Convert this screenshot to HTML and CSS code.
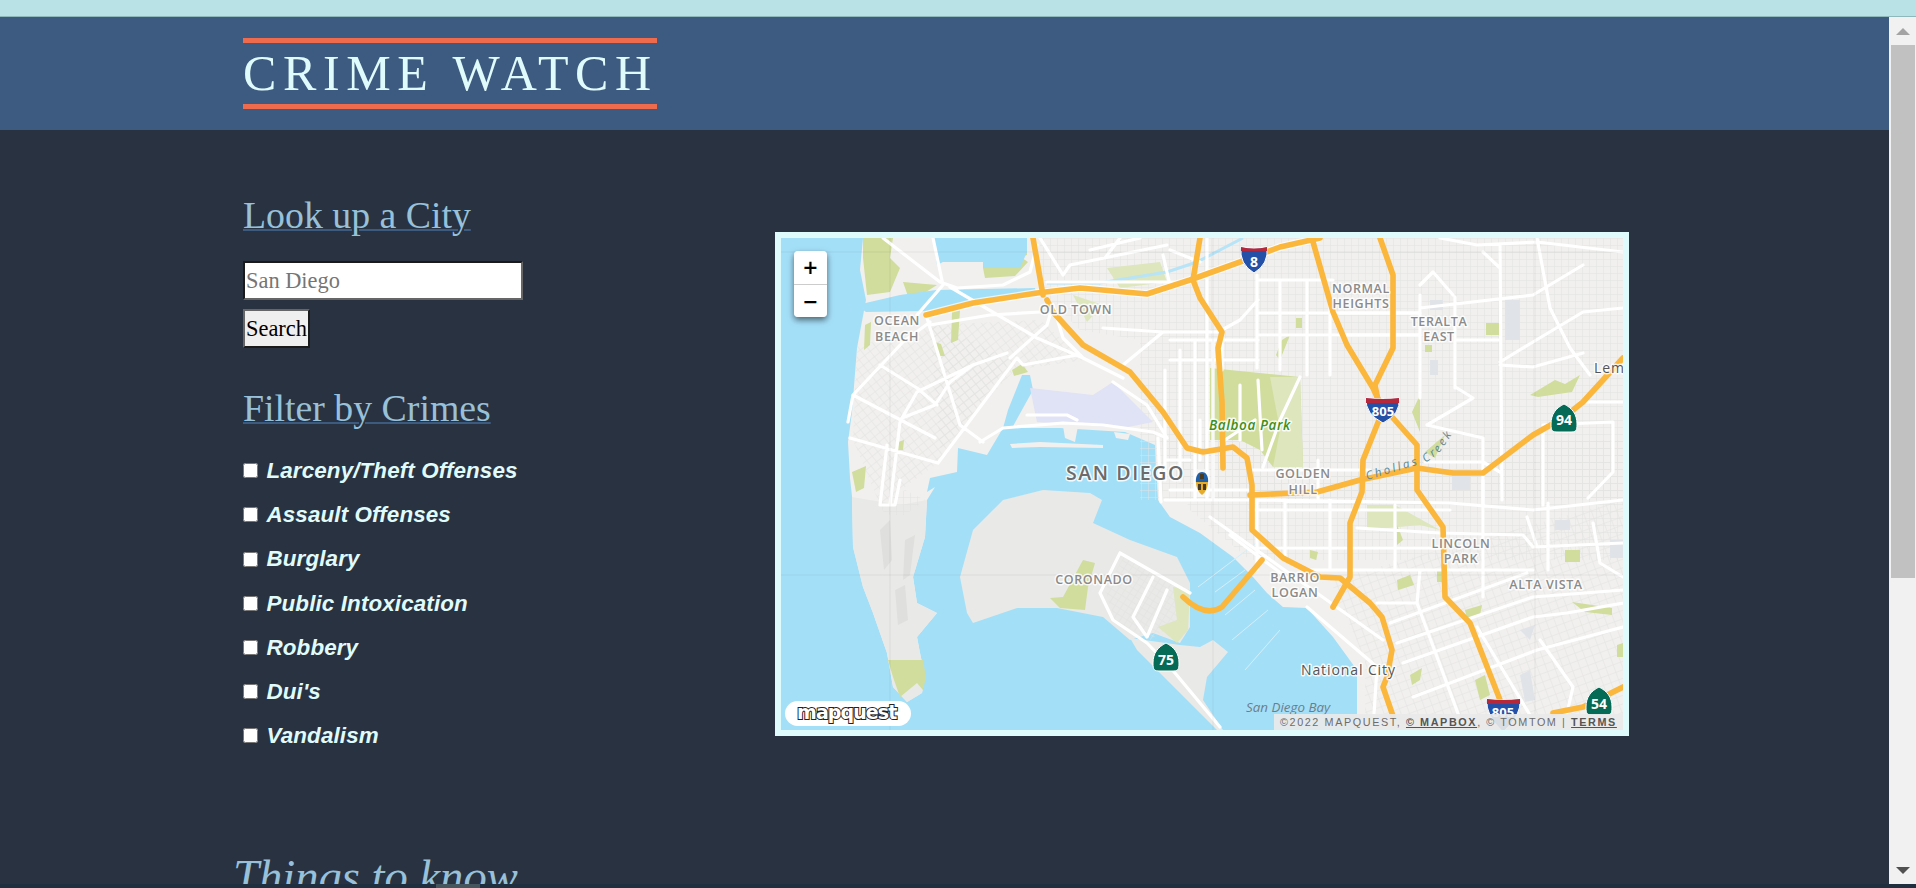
FILE: index.html
```html
<!DOCTYPE html>
<html lang="en">
<head>
<meta charset="utf-8">
<title>Crime Watch</title>
<link rel="stylesheet" href="styles.css">
</head>
<body>
<div class="topbar"></div>
<div class="window">
  <main class="page">
    <header class="banner"><h1 class="brand">CRIME WATCH</h1></header>
    <section class="content">
      <aside class="sidebar">
        <h2 class="heading">Look up a City</h2>
        <form class="search">
          <input class="city" type="text" placeholder="San Diego">
          <button class="go" type="button">Search</button>
        </form>
        <h2 class="heading">Filter by Crimes</h2>
        <ul class="filters">
          <li><label class="filter"><input class="check" type="checkbox"><span>Larceny/Theft Offenses</span></label></li>
          <li><label class="filter"><input class="check" type="checkbox"><span>Assault Offenses</span></label></li>
          <li><label class="filter"><input class="check" type="checkbox"><span>Burglary</span></label></li>
          <li><label class="filter"><input class="check" type="checkbox"><span>Public Intoxication</span></label></li>
          <li><label class="filter"><input class="check" type="checkbox"><span>Robbery</span></label></li>
          <li><label class="filter"><input class="check" type="checkbox"><span>Dui's</span></label></li>
          <li><label class="filter"><input class="check" type="checkbox"><span>Vandalism</span></label></li>
        </ul>
      </aside>
      <div class="map">
        <svg class="tiles" viewBox="781 238 842 492" width="842" height="492">
          <defs>
            <pattern id="gridA" width="7" height="7" patternUnits="userSpaceOnUse"><path d="M0 0H7M0 0V7" class="fine"/></pattern>
            <pattern id="gridB" width="7" height="7" patternUnits="userSpaceOnUse" patternTransform="rotate(-38)"><path d="M0 0H7M0 0V7" class="fine"/></pattern>
            <pattern id="gridC" width="8" height="8" patternUnits="userSpaceOnUse" patternTransform="rotate(-20)"><path d="M0 0H8M0 0V8" class="fine"/></pattern>
            <pattern id="gridD" width="6" height="6" patternUnits="userSpaceOnUse" patternTransform="rotate(32)"><path d="M0 0H6M0 0V6" class="fine"/></pattern>
          </defs>
          <rect class="water" x="781" y="238" width="842" height="492"/>
          <!-- mainland -->
          <path class="land" d="M863 238H1623V730H1357V670L1333 637 1307 608 1283 607 1267 593 1253 577 1233 557 1200 533 1170 517 1158 500 1155 445 1125 432 1060 428 1012 428 1033 390 1030 375 1022 375 1008 410 1003 428 987 455 958 448 957 472 930 478 927 492 935 487 927 500 925 537 913 577 917 603 937 613 917 637 920 653 925 677 922 693 907 702 893 687 887 653 873 613 863 587 853 547 852 497 853 505 850 478 848 442 852 412 857 348 866 300 860 270Z"/>
          <path class="land-dim" d="M852 497L853 547 863 587 873 613 887 653 893 687 907 702 922 693 925 677 920 653 917 637 937 613 917 603 913 577 925 537 927 500 900 505Z"/>
          <path class="shade" d="M880 530L890 520 892 560 884 570ZM905 540L915 535 910 575 903 580ZM895 590L905 585 908 620 898 625Z"/>
          <!-- Coronado and strand -->
          <path class="land-dim" d="M960 577L973 530 1003 500 1043 490 1090 493 1102 500 1093 523 1130 540 1177 557 1190 583 1190 627 1180 643 1153 633 1130 640 1103 617 1057 608 1017 608 973 623 967 613Z"/>
          <path class="land-dim" d="M1130 638L1180 645 1200 647 1213 640 1228 652 1207 677 1203 700 1223 730 1217 730 1137 650Z"/>
          <path class="land" d="M1010 444L1040 442 1103 445 1103 448 1040 447 1012 448Z"/>
          <path class="land" d="M1063 426L1078 426 1075 442 1065 438ZM1114 432L1130 434 1128 440 1116 438Z"/>
          <!-- street texture -->
          <path class="tex-b" d="M857 345L905 335 940 325 1010 360 938 463 880 505 853 440Z"/>
          <path class="tex-b" d="M930 325L1040 320 1085 360 1015 370 940 450Z"/>
          <path class="tex-a" d="M1040 238H1623V500H1140V340L1080 330 1040 290Z"/>
          <path class="tex-a" d="M1160 440H1623V560H1250L1190 510Z"/>
          <path class="tex-c" d="M1330 580L1623 500V730H1365L1365 660Z"/>
          <path class="tex-d" d="M1105 590L1125 555 1190 590 1180 620 1150 640 1115 620Z"/>
          <path class="tex-a" d="M880 505L905 490 925 500 905 515 885 515Z"/>
          <path class="block" d="M1430 300H1443V310H1430ZM1505 300H1520V340H1505ZM1430 360H1438V375H1430ZM1452 470H1470V490H1452ZM1555 520H1570V530H1555ZM1610 540H1623V558H1610ZM1520 630L1535 625 1530 640ZM1520 675L1530 670 1535 700 1525 702Z"/>
          <!-- parks -->
          <path class="park" d="M1210 368L1300 377 1303 467 1273 467 1260 450 1240 440 1210 440Z"/>
          <path class="park-soft" d="M1270 377L1300 377 1303 467 1273 467 1280 430Z"/>
          <path class="park" d="M888 660L923 660 926 677 923 690 917 683 900 697 893 677Z"/>
          <path class="park" d="M863 238H893L890 258 900 268 890 292 867 295 863 258Z"/>
          <path class="park" d="M903 282L937 285 910 302Z"/>
          <path class="park" d="M993 238H1027L1027 255 1005 262 983 268 985 278 1015 276 1028 262"/>
          <path class="park-soft" d="M1107 268L1160 262 1167 282 1120 288Z"/>
          <path class="park-soft" d="M1073 295L1103 305 1087 322Z"/>
          <path class="park" d="M1050 598L1063 597 1083 560 1095 563 1088 587 1085 610 1060 608Z"/>
          <path class="park-soft" d="M1173 587L1190 590 1188 630 1177 643 1158 627 1177 620Z"/>
          <path class="park" d="M865 325L871 322 870 345 864 350ZM952 312L960 310 958 340 951 343ZM935 342L941 344 945 356 938 356ZM1012 370L1022 364 1028 372 1014 376ZM898 442L904 440 903 450 897 450ZM852 472L866 466 864 488 856 492Z"/>
          <path class="park" d="M1530 395L1555 380 1565 384 1580 375 1572 392 1538 397ZM1486 323H1499V335H1486ZM1425 345H1432V352H1425ZM1296 318H1302V328H1296Z"/>
          <path class="park" d="M1412 412L1420 395 1420 432ZM1425 452L1445 435 1435 458ZM1282 340L1290 335 1280 360 1276 355Z"/>
          <path class="park-soft" d="M1367 505H1395L1440 530 1420 525 1367 530Z"/>
          <path class="park" d="M1397 525L1403 540 1397 545ZM1310 550L1318 552 1316 560 1310 558ZM1397 580L1410 575 1414 585 1398 590ZM1437 570H1444V582H1437ZM1465 610L1482 605 1480 615 1467 618ZM1565 550H1580V562H1565ZM1572 602L1612 608 1612 615 1585 612ZM1617 645L1623 643V657L1617 657ZM1410 675L1422 668 1420 680 1412 685ZM1475 680L1485 675 1490 695 1480 700Z"/>
          <!-- airport -->
          <path class="airport" d="M1030 388L1093 395 1113 382 1153 422 1123 428 1037 422Z"/>
          <!-- water channels -->
          <path class="water" d="M857 305L900 295 936 290 1035 288 1037 296 973 302 927 311 866 312Z"/>
          <path class="water" d="M933 238H1027L1027 252 1020 268 983 268 983 262 943 262 937 265Z"/>
          <path class="river" d="M1047 283L1100 283 1167 272 1197 262 1243 238"/>
          <!-- piers -->
          <path class="pier" d="M1198 587L1260 540M1215 592L1245 570M1225 615L1255 590M1232 640L1268 610M1245 670L1280 630"/>
          <!-- minor white roads -->
          <path class="road" d="M883 238L940 282 957 288 1003 285 1030 272 1037 245M933 238L943 285 917 315M950 287L1037 338 1083 358M1010 358L1047 325 1053 305M927 318L960 425 983 442M930 325L990 315 1040 312M853 395L903 342 930 322M848 422L853 395 935 438M880 365L917 388 937 405M850 438L938 463M938 463L1017 358 1023 365 1077 355 1083 358M902 418L917 392 973 365 1007 353M902 418L935 405 950 382 973 365M900 422L890 505M880 505L887 445M880 505L895 505 900 480M980 442L1003 428 1063 423 1103 425 1153 432 1167 438M1158 438L1161 502M1027 415H1067L1077 420M1113 382L1147 405 1167 438M1123 365L1163 332H1220M1053 305L1063 338 1083 358 1123 378M1063 275L1070 265 1167 245M1103 328L1163 332M1163 255L1170 285M1047 282H1187M1040 238L1063 275M1090 250L1140 238M1120 238L1105 258M1170 250L1200 262"/>
          <path class="road" d="M1257 280H1333M1257 313H1420M1257 335H1420M1257 275V368M1280 280V370M1307 280V375M1330 300V375M1207 238V500M1213 340V500M1170 340H1258M1170 360H1258M1165 370V480M1180 350V480M1195 340V500M1222 370V330L1240 320 1258 300M1170 490H1250M1165 500H1250M1165 460H1190M1200 420V460M1258 380L1262 450M1240 385V440M1225 440L1255 420M1300 377L1280 420 1263 467M1250 510H1450M1252 470H1370M1318 460V500"/>
          <path class="road" d="M1420 308L1533 295 1583 265M1440 238L1477 245 1537 242 1623 252M1500 245L1502 500M1537 238L1550 308 1570 348 1590 375M1500 362L1533 342 1583 312 1623 308M1420 295V398M1455 297V388M1420 285L1433 272 1453 295M1455 340H1500M1500 365L1533 367 1583 353M1483 252L1500 268M1457 388L1473 398 1427 425M1427 425L1483 438V505M1543 425L1613 422V472L1588 498M1543 432V505M1580 402H1623M1425 462H1483M1483 462L1500 472M1340 313H1420M1340 335H1420"/>
          <path class="road" d="M1257 500L1450 503 1533 510 1623 500M1357 528L1440 533 1523 535 1533 547 1623 543M1257 548H1443M1310 570H1533M1483 480V597M1390 623L1527 573M1397 643L1533 597 1623 590M1403 663L1533 617 1567 613 1623 603M1413 697L1537 650 1623 627M1420 570L1417 603 1463 727M1377 603H1417M1477 627L1533 720M1540 640L1573 687 1567 713M1548 503V570M1527 517L1537 547M1593 523L1600 563 1623 577M1210 517L1383 640M1307 607L1377 667 1373 730M1257 500V570M1285 500V560M1330 500V570M1395 505V570M1230 535L1290 580M1120 553L1190 593M1120 553L1100 593 1113 620 1147 643 1170 667 1220 727M1153 577L1133 617 1147 637 1167 590"/>
          <!-- tile seams -->
          <path class="seam" d="M781 252H1623M781 575H1623M890 238V730M1213 238V730M1535 238V730"/>
          <!-- highways -->
          <path class="casing" d="M926 315L973 303 1037 293 1080 288 1147 294 1190 280 1240 262 1280 247 1320 238"/>
          <path class="hw" d="M926 315L973 303 1037 293 1080 288 1147 294 1190 280 1240 262 1280 247 1320 238"/>
          <path class="hw" d="M1033 238L1043 295M1047 300L1053 312 1083 345 1130 372 1163 412 1187 448 1203 452 1233 447 1247 458 1252 485V530L1283 558 1320 577 1340 578 1370 603 1382 617 1392 650 1387 677 1383 687 1393 716"/>
          <path class="hw" d="M1200 238L1193 280 1200 298 1222 332 1218 348 1222 402 1223 468"/>
          <path class="hw" d="M1250 495L1317 492 1360 480 1417 468 1453 473H1483L1533 435 1563 418 1583 402 1623 358"/>
          <path class="hw" d="M1313 242L1333 312 1347 345 1373 388 1383 410 1363 460 1362 492 1350 523V577L1333 607"/>
          <path class="hw" d="M1380 238L1393 275V348L1375 385 1378 400M1393 418L1417 445V490L1443 527 1445 597 1470 623 1502 705"/>
          <path class="hw" d="M1183 597Q1205 618 1222 607L1262 560"/>
          <path class="hw" d="M1553 713L1583 707 1623 687"/>
          <!-- labels -->
          <text class="lbl" x="897" y="325" text-anchor="middle">OCEAN</text>
          <text class="lbl" x="897" y="341" text-anchor="middle">BEACH</text>
          <text class="lbl" x="1076" y="314" text-anchor="middle">OLD TOWN</text>
          <text class="lbl" x="1361" y="293" text-anchor="middle">NORMAL</text>
          <text class="lbl" x="1361" y="308" text-anchor="middle">HEIGHTS</text>
          <text class="lbl" x="1439" y="326" text-anchor="middle">TERALTA</text>
          <text class="lbl" x="1439" y="341" text-anchor="middle">EAST</text>
          <text class="lbl" x="1303" y="478" text-anchor="middle">GOLDEN</text>
          <text class="lbl" x="1303" y="494" text-anchor="middle">HILL</text>
          <text class="lbl" x="1295" y="582" text-anchor="middle">BARRIO</text>
          <text class="lbl" x="1295" y="597" text-anchor="middle">LOGAN</text>
          <text class="lbl" x="1461" y="548" text-anchor="middle">LINCOLN</text>
          <text class="lbl" x="1461" y="563" text-anchor="middle">PARK</text>
          <text class="lbl" x="1546" y="589" text-anchor="middle">ALTA VISTA</text>
          <text class="lbl" x="1094" y="584" text-anchor="middle">CORONADO</text>
          <text class="city-lbl" x="1066" y="480">SAN DIEGO</text>
          <text class="town" x="1594" y="373">Lem</text>
          <text class="town" x="1301" y="675">National City</text>
          <text class="park-lbl" x="1209" y="430">Balboa Park</text>
          <text class="bay-lbl" x="1246" y="712">San Diego Bay</text>
          <path id="creek" d="M1367 480L1427 462 1440 452 1462 420" fill="none"/>
          <text class="creek-lbl"><textPath href="#creek">Chollas Creek</textPath></text>
          <!-- shields -->
          <g>
            <path class="i-blue" d="M1241 247Q1254 250 1267 247 1269 264 1254 273 1239 264 1241 247Z"/>
            <path class="i-red" d="M1241 247Q1254 250 1267 247L1267 251H1241Z"/>
            <text class="sh" x="1254" y="267" text-anchor="middle">8</text>
            <path class="i-blue" d="M1366 398Q1383 400 1399 398 1401 414 1383 423 1365 414 1366 398Z"/>
            <path class="i-red" d="M1366 398Q1383 400 1399 398L1399 403H1366Z"/>
            <text class="sh narrow" x="1383" y="416" text-anchor="middle">805</text>
            <path class="i-blue" d="M1487 699Q1503 701 1520 699 1522 715 1503 732 1485 715 1487 699Z"/>
            <path class="i-red" d="M1487 699Q1503 701 1520 699L1520 704H1487Z"/>
            <text class="sh narrow" x="1503" y="717" text-anchor="middle">805</text>
            <path class="ca" d="M1564 404C1572 408 1577 414 1577 424 1577 431 1576 432 1570 432H1558C1552 432 1551 431 1551 424 1551 414 1556 408 1564 404Z"/>
            <text class="sh" x="1564" y="425" text-anchor="middle">94</text>
            <path class="ca" d="M1166 643C1174 647 1179 653 1179 663 1179 670 1178 671 1172 671H1160C1154 671 1153 670 1153 663 1153 653 1158 647 1166 643Z"/>
            <text class="sh" x="1166" y="665" text-anchor="middle">75</text>
            <path class="ca" d="M1599 687C1607 691 1612 697 1612 707 1612 714 1611 715 1605 715H1593C1587 715 1586 714 1586 707 1586 697 1591 691 1599 687Z"/>
            <text class="sh" x="1599" y="709" text-anchor="middle">54</text>
          </g>
          <!-- marker -->
          <g>
            <rect class="pin-halo" x="1194" y="469" width="16" height="28" rx="2"/>
            <path class="pin-blue" d="M1196 483C1195 475 1199 472 1202 472 1205 472 1209 475 1208 483Z"/>
            <path class="pin-gold" d="M1196 482H1208C1208 488 1205 493 1202 495 1199 493 1196 488 1196 482Z"/>
            <path class="pin-dark" d="M1200 474H1204V479H1200ZM1198 484H1201V490H1198ZM1203 484H1206V490H1203Z"/>
          </g>
        </svg>
        <div class="zoombox">
          <button class="zoombtn" type="button">+</button>
          <button class="zoombtn" type="button">−</button>
        </div>
        <div class="logo">mapquest</div>
        <div class="credit">©2022 MAPQUEST, <a class="creditlink">© MAPBOX</a>, © TOMTOM | <a class="creditlink">TERMS</a></div>
      </div>
    </section>
    <h2 class="know">Things to know</h2>
  </main>
  <div class="scrollbar">
    <div class="sb-btn"><span class="arrow-up"></span></div>
    <div class="sb-track"><div class="sb-thumb"></div></div>
    <div class="sb-btn"><span class="arrow-down"></span></div>
  </div>
</div>
<div class="bottomstrip"><span class="strip-patch"></span></div>
</body>
</html>
```
FILE: styles.css
```css
* { box-sizing: border-box; }
html, body { height: 100%; }
body {
  margin: 0;
  height: 888px;
  overflow: hidden;
  display: flex;
  flex-direction: column;
  background: #293241;
  color: #e0fbfc;
  font-family: "Liberation Serif", serif;
  font-size: 22.4px;
  line-height: 1.5;
}
.topbar { height: 17px; background: #b9e2e6; border-bottom: 1px solid #8fb8bc; flex: none; }
.window { flex: 1; min-height: 0; display: flex; }
.page { flex: 1; min-width: 0; overflow: hidden; }
.banner { height: 113px; background: #3d5a80; padding: 21px 0 0 243px; }
.brand {
  display: inline-block;
  width: 414px;
  margin: 0;
  border-top: 5px solid #ee6c4d;
  border-bottom: 5px solid #ee6c4d;
  height: 71px;
  font-size: 50px;
  font-weight: 400;
  line-height: 61px;
  letter-spacing: 6.6px;
  white-space: nowrap;
  color: #e0fbfc;
}
.content { display: flex; padding: 56px 0 0 243px; }
.sidebar { width: 532px; flex: none; }
.heading {
  margin: 0 0 17px;
  font-size: 37.8px;
  font-weight: 400;
  line-height: 58px;
  color: #98c1d9;
  text-decoration: underline;
  text-decoration-color: #3d5a80;
  text-decoration-thickness: 2px;
}
.search { display: flex; flex-direction: column; align-items: flex-start; gap: 9px; margin-bottom: 31px; }
.city {
  width: 280px;
  height: 39px;
  padding: 1px;
  border: 2px solid;
  border-color: #1a1a1a #666 #666 #1a1a1a;
  background: #fff;
  font: 22.4px/33px "Liberation Serif", serif;
}
.city::placeholder { color: #757575; opacity: 1; }
.go {
  height: 39px;
  padding: 1px;
  border: 2px solid;
  border-color: #666 #1a1a1a #1a1a1a #666;
  background: #efefef;
  color: #000;
  font: 22.4px/33px "Liberation Serif", serif;
}
.filters { list-style: none; margin: 0; padding: 0; display: flex; flex-direction: column; gap: 10.6px; }
.filter {
  display: flex;
  align-items: center;
  gap: 8.5px;
  font-family: "Liberation Sans", sans-serif;
  font-style: italic;
  font-weight: 700;
  line-height: 33.6px;
  letter-spacing: .12px;
  color: #e0fbfc;
}
.check { width: 15px; height: 15px; margin: 0; flex: none; }
.map {
  position: relative;
  flex: none;
  width: 854px;
  height: 504px;
  margin-top: 46px;
  border: 6px solid #e0fbfc;
  overflow: hidden;
}
.tiles { display: block; }
.water { fill: #a4dff8; }
.land { fill: #f1f0ee; }
.land-dim { fill: #e9e9e7; }
.shade { fill: #dfdfdd; }
.block { fill: #e0e4e8; }
.fine { fill: none; stroke: #e2e2e0; stroke-width: 1; }
.tex-a { fill: url(#gridA); }
.tex-b { fill: url(#gridB); }
.tex-c { fill: url(#gridC); }
.tex-d { fill: url(#gridD); }
.park { fill: #d0dd9d; }
.park-soft { fill: #dde6bd; }
.airport { fill: #e0e2f5; }
.river { fill: none; stroke: #b7e4f7; stroke-width: 3; }
.pier { fill: none; stroke: #d4effa; stroke-width: 1; }
.road { fill: none; stroke: #fff; stroke-width: 3.2; stroke-linejoin: round; stroke-linecap: round; }
.seam { fill: none; stroke: #000; stroke-opacity: .06; stroke-width: 1; }
.casing { fill: none; stroke: #fff; stroke-width: 8; stroke-opacity: .7; }
.hw { fill: none; stroke: #fbb63c; stroke-width: 5.6; stroke-linejoin: round; stroke-linecap: round; }
.lbl, .city-lbl, .town, .park-lbl, .bay-lbl, .creek-lbl, .sh { font-family: "Open Sans", sans-serif; }
.lbl, .city-lbl, .town, .park-lbl, .bay-lbl {
  paint-order: stroke;
  stroke: #fff;
  stroke-width: 3px;
  stroke-opacity: .85;
  stroke-linejoin: round;
}
.lbl { font-size: 12.5px; font-weight: 600; letter-spacing: .6px; fill: #8a8a8a; }
.city-lbl { font-size: 19.5px; font-weight: 600; letter-spacing: 1.6px; fill: #6b6b6b; }
.town { font-size: 14px; letter-spacing: .9px; fill: #555; }
.park-lbl { font-size: 13.5px; font-style: italic; font-weight: 600; letter-spacing: .6px; fill: #3d8f22; }
.bay-lbl { font-size: 13.4px; font-style: italic; fill: #6c7e8a; stroke-width: 0; }
.creek-lbl { font-size: 11.5px; font-style: italic; letter-spacing: 2.6px; fill: #5d8791; }
.sh { font-size: 14px; font-weight: 700; fill: #fff; }
.narrow { font-size: 13px; }
.i-blue { fill: #2450a8; stroke: #fff; stroke-width: 1; }
.i-red { fill: #b5283c; }
.ca { fill: #056b57; stroke: #fff; stroke-width: 1; }
.pin-halo { fill: #fff; fill-opacity: .5; }
.pin-blue { fill: #1f5fa8; }
.pin-gold { fill: #e5ac2c; }
.pin-dark { fill: #4a3a20; }
.zoombox {
  position: absolute;
  left: 13px;
  top: 13px;
  width: 33px;
  height: 66px;
  display: flex;
  flex-direction: column;
  border-radius: 4px;
  overflow: hidden;
  box-shadow: 0 3px 6px rgba(0, 0, 0, .55);
}
.zoombtn {
  flex: 1;
  padding: 0;
  border: 0;
  background: #fff;
  color: #000;
  font: 600 25px/30px "Open Sans", sans-serif;
}
.zoombtn + .zoombtn { border-top: 1px solid #ccc; }
.logo {
  position: absolute;
  left: 4px;
  bottom: 4px;
  width: 126px;
  height: 25px;
  padding-left: 12px;
  border-radius: 13px;
  background: #fff;
  font: 700 19px/23px "DejaVu Sans", sans-serif;
  letter-spacing: -.9px;
  color: #fff;
  -webkit-text-stroke: 2px #222;
  paint-order: stroke fill;
}
.credit {
  position: absolute;
  right: 0;
  bottom: 0;
  width: 349px;
  height: 16px;
  padding-left: 6px;
  background: rgba(233, 233, 233, .92);
  font: 10.8px/16px "Liberation Sans", sans-serif;
  letter-spacing: 1.6px;
  white-space: nowrap;
  color: #6c6c6c;
}
.creditlink { color: #555; font-weight: 700; text-decoration: underline; }
.know {
  margin: 89px 0 0 233px;
  font-size: 46.6px;
  font-style: italic;
  font-weight: 400;
  line-height: 69px;
  color: #98c1d9;
}
.scrollbar { width: 27px; flex: none; display: flex; flex-direction: column; background: #f1f1f1; }
.sb-btn { height: 28px; flex: none; display: flex; align-items: center; justify-content: center; padding-left: 1px; }
.sb-track { flex: 1; padding: 0 1px 0 2px; }
.sb-thumb { height: 533px; background: #c1c1c1; }
.arrow-up { width: 0; height: 0; border: 7px solid transparent; border-top: 0; border-bottom: 7px solid #a3a3a3; }
.arrow-down { width: 0; height: 0; border: 7px solid transparent; border-bottom: 0; border-top: 7px solid #505050; }
.bottomstrip { position: relative; height: 4px; flex: none; background: #1f2f40; }
.strip-patch { position: absolute; left: 436px; top: 0; width: 44px; height: 4px; background: #46565f; }
```
